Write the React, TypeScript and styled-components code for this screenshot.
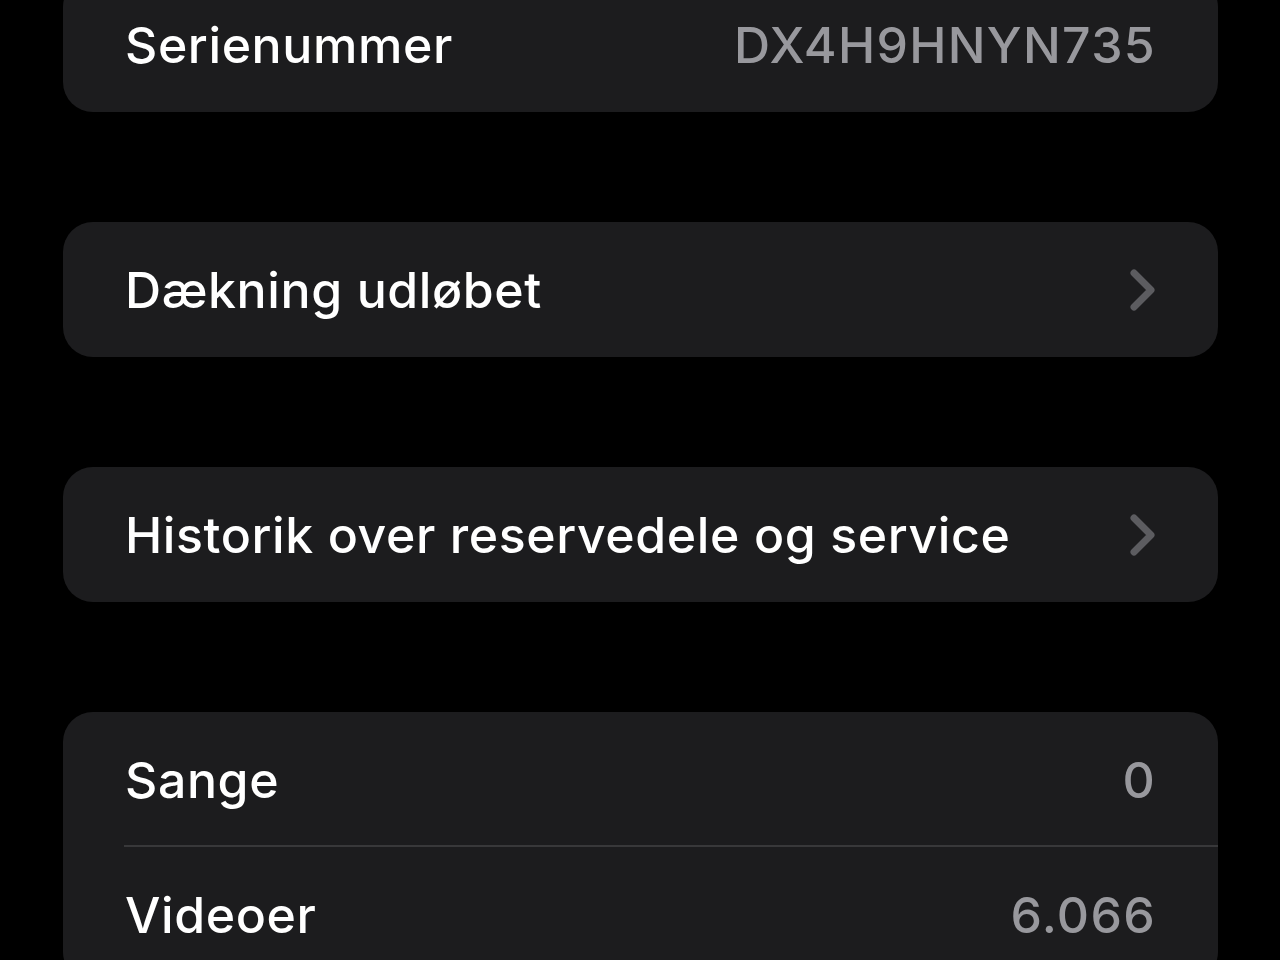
import React from "react";
import styled, { createGlobalStyle } from "styled-components";

const GlobalStyle = createGlobalStyle`
  html, body {
    margin: 0;
    padding: 0;
    background: #000000;
  }
  body {
    font-family: Inter, "Noto Sans", "DejaVu Sans", sans-serif;
    -webkit-font-smoothing: antialiased;
  }
`;

const Page = styled.div`
  width: 1280px;
  height: 960px;
  overflow: hidden;
  background: #000000;
`;

// the screen is scrolled, so the first card starts above the top edge
const List = styled.div`
  display: flex;
  flex-direction: column;
  gap: 110px;
  padding: 0 62px 0 63px;
  margin-top: -23px;
`;

const Card = styled.div`
  background: #1c1c1e;
  border-radius: 30px;
  overflow: hidden;
`;

const Row = styled.div<{ $divider?: boolean }>`
  position: relative;
  display: flex;
  align-items: center;
  justify-content: space-between;
  height: 135px;
  padding: 0 63px 0 62px;
  box-sizing: border-box;
  ${(p) =>
    p.$divider &&
    `
    &::after {
      content: "";
      position: absolute;
      left: 61px;
      right: 0;
      bottom: 0;
      height: 2px;
      background: #38383a;
    }
  `}
`;

const Label = styled.span`
  font-size: 50px;
  font-weight: 500;
  color: #ffffff;
  letter-spacing: 0.6px;
`;

const Value = styled.span`
  font-size: 50px;
  font-weight: 500;
  color: #98989d;
  letter-spacing: 1.3px;
  margin-right: -1px;
`;

const Chevron = () => (
  <svg width="26" height="42" viewBox="0 0 26 42" style={{ marginRight: -1 }}>
    <path
      d="M4 4 L21 21 L4 38"
      fill="none"
      stroke="#5c5c60"
      strokeWidth="7"
      strokeLinecap="round"
      strokeLinejoin="round"
    />
  </svg>
);

export default function App() {
  return (
    <Page>
      <GlobalStyle />
      <List>
        <Card>
          <Row>
            <Label>Serienummer</Label>
            <Value>DX4H9HNYN735</Value>
          </Row>
        </Card>
        <Card>
          <Row>
            <Label>Dækning udløbet</Label>
            <Chevron />
          </Row>
        </Card>
        <Card>
          <Row>
            <Label>Historik over reservedele og service</Label>
            <Chevron />
          </Row>
        </Card>
        <Card>
          <Row $divider>
            <Label>Sange</Label>
            <Value>0</Value>
          </Row>
          <Row>
            <Label>Videoer</Label>
            <Value>6.066</Value>
          </Row>
        </Card>
      </List>
    </Page>
  );
}
